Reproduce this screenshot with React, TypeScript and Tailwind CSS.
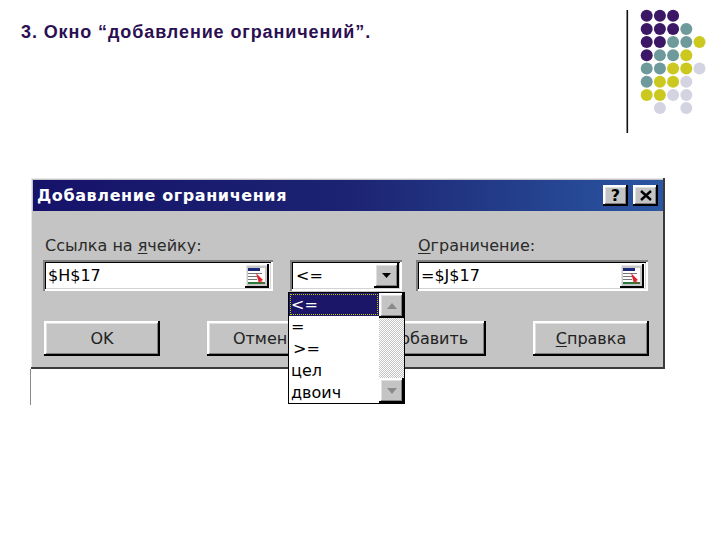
import React from 'react';

const DOTS: [number, number, string][] = [];
const GRID = ['PPP..', 'PPPT.', 'PPTTY', 'PTTY.', 'TTYYL', 'TYYL.', 'YYLL.', '.L.L.'];
const DOT_COLORS: Record<string, string> = {
  P: '#3b1766',
  T: '#6f9a9c',
  Y: '#cbc91f',
  L: '#d3d3e2',
};
GRID.forEach((row, r) => {
  row.split('').forEach((c, i) => {
    if (c !== '.') DOTS.push([26.7 + i * 13.2, 15.7 + r * 13.2, DOT_COLORS[c]]);
  });
});

const raised =
  'shadow-[inset_-2px_-2px_0_#000,inset_2px_2px_0_#fff,inset_-3px_-3px_0_#808080,inset_3px_3px_0_#e0e0e0]';
const sunken =
  'shadow-[inset_2px_2px_0_#808080,inset_-2px_-2px_0_#fff,inset_3px_3px_0_#000,inset_-3px_-3px_0_#d4d4d4]';

function RefIcon() {
  return (
    <svg width="24" height="24" viewBox="0 0 24 24">
      <rect x="0" y="0" width="24" height="24" fill="#c8c8c8" />
      <rect x="0" y="0" width="23" height="1.5" fill="#fff" />
      <rect x="0" y="0" width="1.5" height="23" fill="#fff" />
      <rect x="22" y="0" width="2" height="24" fill="#000" />
      <rect x="0" y="22" width="24" height="2" fill="#000" />
      <rect x="3" y="4" width="17" height="15" fill="#fff" />
      <rect x="3" y="4" width="12" height="3" fill="#1a2a7a" />
      <rect x="3" y="9" width="14" height="1" fill="#777" />
      <rect x="3" y="12" width="9" height="1" fill="#777" />
      <rect x="3" y="15" width="9" height="1" fill="#777" />
      <rect x="3" y="18" width="17" height="2" fill="#2a7a3a" />
      <path d="M11 9 L18 16 L16 17 L19 19 L18 19.5 L15 17.5 L14 19.5 Z" fill="#e0222a" />
    </svg>
  );
}

function Label({ ul, rest, pre }: { pre: string; ul: string; rest: string }) {
  return (
    <div className="h-[20px] pl-[2px] text-[16px] leading-[20px] text-[#2a2a2a]">
      {pre}
      <span className="underline underline-offset-2">{ul}</span>
      {rest}
    </div>
  );
}

function Button({ children }: { children: React.ReactNode }) {
  return (
    <div
      className={`w-[116px] h-[35px] flex items-center justify-center text-[16px] text-[#222] bg-[#c4c4c4] ${raised}`}
    >
      {children}
    </div>
  );
}

export default function App() {
  return (
    <div className="relative w-[720px] h-[540px] bg-white overflow-hidden font-['Liberation_Sans',Arial,sans-serif]">
      {/* Заголовок слайда */}
      <div className="flex h-[135px]">
        <h1 className="pl-[21px] pt-[21px] text-[18px] font-bold leading-[22px] tracking-[0.9px] text-[#2b0f52]">
          3. Окно “добавление ограничений”.
        </h1>
        <svg className="ml-auto mr-[10px]" width="90" height="135" viewBox="0 0 90 135">
          <rect x="6.5" y="10" width="1.6" height="123" fill="#111" />
          {DOTS.map(([cx, cy, fill], i) => (
            <circle key={i} cx={cx} cy={cy} r="6" fill={fill} />
          ))}
        </svg>
      </div>

      {/* Окно */}
      <div className="relative mt-[43px] ml-[31px] w-[634px] h-[191px] bg-[#c4c4c4] p-[2px] font-['DejaVu_Sans',Tahoma,sans-serif] shadow-[inset_-2px_-2px_0_#3a3a3a,inset_1px_1px_0_#e8e8e8]">
        <div className="h-[31px] flex items-center pl-[4px] pr-[5px] bg-gradient-to-r from-[#16126a] via-[#1c2372] to-[#2b56a2]">
          <span className="text-white font-bold text-[16px] tracking-[0.6px]">Добавление ограничения</span>
          <div className="ml-auto flex gap-[5px]">
            <div className={`w-[25px] h-[21px] bg-[#c4c4c4] flex items-center justify-center font-bold text-[16px] text-black ${raised}`}>
              ?
            </div>
            <div className={`w-[25px] h-[21px] bg-[#c4c4c4] flex items-center justify-center ${raised}`}>
              <svg width="12" height="11" viewBox="0 0 12 11">
                <path d="M1 1 L11 10 M11 1 L1 10" stroke="#000" strokeWidth="2.4" />
              </svg>
            </div>
          </div>
        </div>

        <div className="flex pl-[10px] pt-[25px]">
          <div className="w-[230px]">
            <Label pre="Ссылка на " ul="я" rest="чейку:" />
            <div className={`mt-[4px] h-[31px] bg-white flex items-center pl-[5px] pr-[4px] ${sunken}`}>
              <span className="text-[16px] text-black">$H$17</span>
              <div className="ml-auto">
                <RefIcon />
              </div>
            </div>
          </div>

          <div className="w-[112px] ml-[17px] pt-[24px]">
            <div className={`h-[31px] bg-white flex items-center pl-[6px] pr-[3px] ${sunken}`}>
              <span className="text-[16px] text-black">&lt;=</span>
              <div className={`ml-auto w-[25px] h-[25px] bg-[#c4c4c4] flex items-center justify-center ${raised}`}>
                <svg width="9" height="5" viewBox="0 0 9 5">
                  <path d="M0 0 H9 L4.5 5 Z" fill="#000" />
                </svg>
              </div>
            </div>
          </div>

          <div className="w-[232px] ml-[14px]">
            <Label pre="" ul="О" rest="граничение:" />
            <div className={`mt-[4px] h-[31px] bg-white flex items-center pl-[5px] pr-[4px] ${sunken}`}>
              <span className="text-[16px] text-black">=$J$17</span>
              <div className="ml-auto">
                <RefIcon />
              </div>
            </div>
          </div>
        </div>

        <div className="flex gap-[47px] pl-[11px] pt-[30px]">
          <Button>OK</Button>
          <Button>Отмена</Button>
          <Button>
            <span>
              <span className="underline underline-offset-2">Д</span>обавить
            </span>
          </Button>
          <Button>
            <span>
              <span className="underline underline-offset-2">С</span>правка
            </span>
          </Button>
        </div>

        {/* Раскрытый список */}
        <div className="absolute left-[257px] top-[114px] w-[117px] h-[112px] bg-white border border-black flex">
          <div className="flex-1 flex flex-col text-[16px] text-black">
            <div className="h-[23px] bg-[#1b1668] text-white pl-[2px] leading-[23px] outline-1 outline-dotted outline-[#c8c800] -outline-offset-2">
              &lt;=
            </div>
            <div className="h-[22.5px] pl-[2px] leading-[22px]">=</div>
            <div className="h-[22.5px] pl-[4px] leading-[22px]">&gt;=</div>
            <div className="h-[22.5px] pl-[2px] leading-[22px]">цел</div>
            <div className="h-[22.5px] pl-[2px] leading-[22px]">двоич</div>
          </div>
          <div className="w-[25px] flex flex-col bg-[repeating-conic-gradient(#c4c4c4_0_25%,#ffffff_0_50%)] bg-[length:2px_2px]">
            <div className={`h-[25px] bg-[#c4c4c4] flex items-center justify-center ${raised}`}>
              <svg width="10" height="6" viewBox="0 0 10 6">
                <path d="M5 0 L10 6 H0 Z" fill="#8a8a8a" />
              </svg>
            </div>
            <div className="flex-1" />
            <div className={`h-[25px] bg-[#c4c4c4] flex items-center justify-center ${raised}`}>
              <svg width="10" height="6" viewBox="0 0 10 6">
                <path d="M0 0 H10 L5 6 Z" fill="#8a8a8a" />
              </svg>
            </div>
          </div>
        </div>
      </div>
      <div className="ml-[30px] h-[36px] border-l border-[#8a8a8a]" />
    </div>
  );
}
